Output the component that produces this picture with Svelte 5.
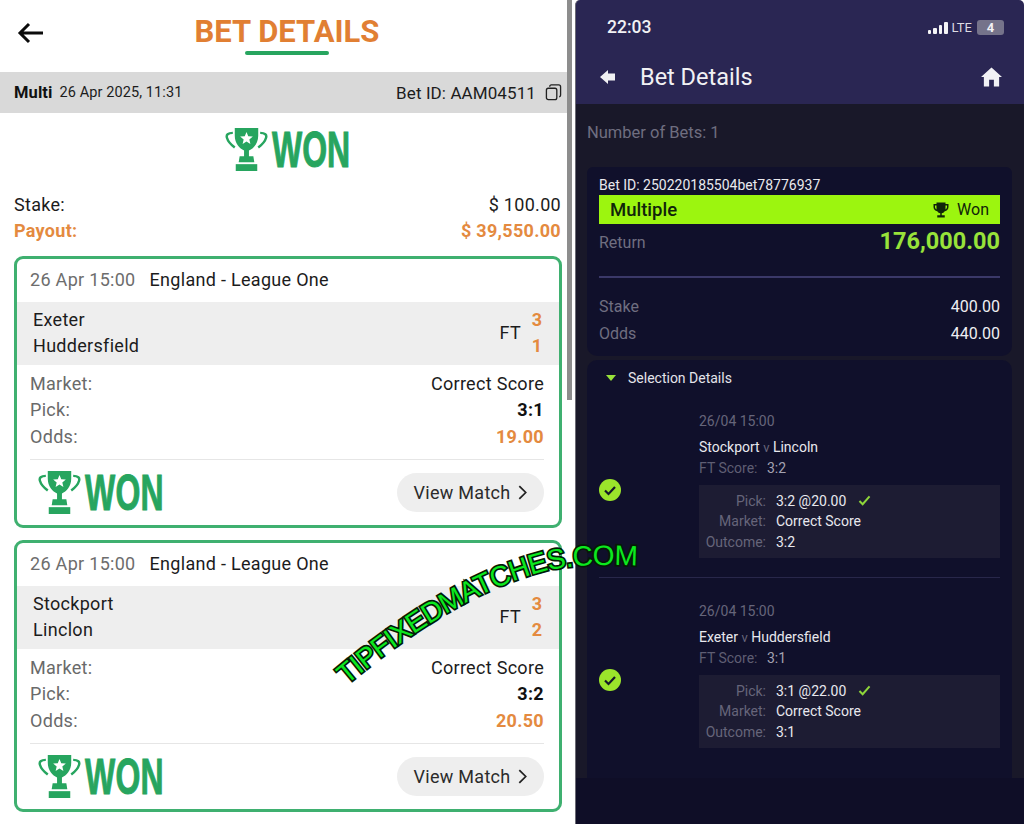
<script>
  const matches = [
    { home: 'Exeter', away: 'Huddersfield', hs: 3, as: 1, pick: '3:1', odds: '19.00' },
    { home: 'Stockport', away: 'Linclon', hs: 3, as: 2, pick: '3:2', odds: '20.50' }
  ];
  const selections = [
    { home: 'Stockport', away: 'Lincoln', score: '3:2', pick: '3:2 @20.00' },
    { home: 'Exeter', away: 'Huddersfield', score: '3:1', pick: '3:1 @22.00' }
  ];
</script>

{#snippet won()}
  <div class="won">
    <svg class="trophy" viewBox="0 0 44 46" width="43" height="45" aria-hidden="true">
      <path d="M10 1H34V9C34 17 29 22 24.500 24V30H29L30 36H14L15 30H19.500V24C15 22 10 17 10 9Z" fill="#27a55f"/>
      <rect x="11" y="38" width="22" height="7" fill="#27a55f"/>
      <path d="M8 6C3 6 1 8 2 11C3 15 6 18 10 21M36 6C41 6 43 8 42 11C41 15 38 18 34 21" fill="none" stroke="#27a55f" stroke-width="2.500"/>
      <path d="M22 5L23.800 9.500L28.500 9.800L24.900 12.800L26 17.400L22 14.900L18 17.400L19.100 12.800L15.500 9.800L20.200 9.500Z" fill="#fff"/>
    </svg>
    <span class="won-text"><span>WON</span></span>
  </div>
{/snippet}

{#snippet wonSmall()}
  <svg viewBox="0 0 24 24" width="18" height="18" aria-hidden="true">
    <path d="M6 2H18V4H22V8C22 11 20 13 17 13.500C16 15 14.500 16 13 16.300V19H17V22H7V19H11V16.300C9.500 16 8 15 7 13.500C4 13 2 11 2 8V4H6ZM6 6H4V8C4 9.500 5 10.800 6 11.200ZM18 6V11.200C19 10.800 20 9.500 20 8V6Z" fill="#10240a"/>
  </svg>
{/snippet}

<div class="screen">
  <section class="left">
    <div class="left-main">
      <header class="top">
        <svg class="back" viewBox="0 0 28 24" width="28" height="24" aria-hidden="true">
          <path d="M26 12H3M12 3L3 12L12 21" fill="none" stroke="#0b0b0b" stroke-width="3"/>
        </svg>
        <h1>BET DETAILS</h1>
      </header>

      <div class="meta">
        <b>Multi</b>
        <span class="when">26 Apr 2025, 11:31</span>
        <span class="betid">Bet ID: AAM04511</span>
        <svg viewBox="0 0 18 18" width="17" height="17" aria-hidden="true">
          <rect x="1.500" y="4.500" width="11" height="12" rx="2" fill="none" stroke="#222" stroke-width="1.400"/>
          <path d="M5 2.800C5 1.800 5.700 1 6.700 1H14.500C15.700 1 16.500 1.800 16.500 3V12C16.500 13 15.800 13.500 15 13.500" fill="none" stroke="#222" stroke-width="1.400"/>
        </svg>
      </div>

      <div class="won-row">{@render won()}</div>

      <div class="totals">
        <div class="line"><span>Stake:</span><span>$ 100.00</span></div>
        <div class="line payout"><span>Payout:</span><span>$ 39,550.00</span></div>
      </div>

      {#each matches as m}
        <article class="card">
          <div class="card-head"><span class="time">26 Apr 15:00</span><span>England - League One</span></div>
          <div class="band">
            <div class="teams"><div>{m.home}</div><div>{m.away}</div></div>
            <span class="ft">FT</span>
            <div class="scores"><div>{m.hs}</div><div>{m.as}</div></div>
          </div>
          <div class="rows">
            <div class="row"><span class="lab">Market:</span><span>Correct Score</span></div>
            <div class="row"><span class="lab">Pick:</span><b>{m.pick}</b></div>
            <div class="row"><span class="lab">Odds:</span><b class="orange">{m.odds}</b></div>
          </div>
          <div class="card-foot">
            {@render won()}
            <div class="view">View Match
              <svg viewBox="0 0 12 18" width="11" height="17" aria-hidden="true"><path d="M2.500 2L9.500 9L2.500 16" fill="none" stroke="#222" stroke-width="1.900"/></svg>
            </div>
          </div>
        </article>
      {/each}
    </div>
    <div class="scrollbar"></div>
  </section>

  <section class="right">
    <div class="status">
      <span class="clock">22:03</span>
      <div class="signal"><i class="b1"></i><i class="b2"></i><i class="b3"></i><i class="b4"></i></div>
      <span class="lte">LTE</span>
      <span class="batt">4</span>
    </div>
    <div class="bar">
      <svg viewBox="0 0 16 14" width="16" height="14" aria-hidden="true"><path d="M0 7L8 0V3.500H15V10.500H8V14Z" fill="#f1f1f4"/></svg>
      <span class="bar-title">Bet Details</span>
      <svg class="home" viewBox="0 0 22 20" width="21" height="20" aria-hidden="true"><path d="M11 0L22 10H19V20H13.500V13H8.500V20H3V10H0Z" fill="#f1f1f4"/></svg>
    </div>

    <div class="body">
      <div class="num">Number of Bets: 1</div>
      <div class="panel first">
        <div class="id">Bet ID: 250220185504bet78776937</div>
        <div class="lime"><span class="multiple">Multiple</span>{@render wonSmall()}<span class="wontxt">Won</span></div>
        <div class="ret"><span>Return</span><b>176,000.00</b></div>
        <div class="rule"></div>
        <div class="kv"><span>Stake</span><em>400.00</em></div>
        <div class="kv"><span>Odds</span><em>440.00</em></div>
      </div>
      <div class="panel second">
        <div class="sel-head"><i class="tri"></i>Selection Details</div>
        {#each selections as s, i}
          {#if i > 0}<div class="sel-rule"></div>{/if}
          <div class="sel" class:later={i > 0}>
            <div class="tick">
              <svg viewBox="0 0 22 22" width="22" height="22" aria-hidden="true"><circle cx="11" cy="11" r="11" fill="#9be52b"/><path d="M6 11.500L9.500 15L16 8" fill="none" stroke="#16182a" stroke-width="2.200"/></svg>
            </div>
            <div class="sel-body">
              <div class="date">26/04 15:00</div>
              <div class="vs">{s.home} <span>v</span> {s.away}</div>
              <div class="ftscore">FT Score: <em>{s.score}</em></div>
              <div class="box">
                <span class="k">Pick:</span>
                <span class="v">{s.pick}
                  <svg viewBox="0 0 14 12" width="13" height="11" aria-hidden="true"><path d="M1.500 6.500L5 10L12.500 1.500" fill="none" stroke="#8ed63a" stroke-width="2.200"/></svg>
                </span>
                <span class="k">Market:</span><span class="v">Correct Score</span>
                <span class="k">Outcome:</span><span class="v">{s.score}</span>
              </div>
            </div>
          </div>
        {/each}
      </div>
      <div class="foot"></div>
    </div>
  </section>

  <svg class="mark" viewBox="0 0 1024 824" width="1024" height="824">
    <defs><path id="curve" d="M347 685C400 640 472 590 545 571C575 564 605 564 645 566"/></defs>
    <text class="mark-text"><textPath href="#curve">TIPFIXEDMATCHES.COM</textPath></text>
  </svg>
</div>

<style>
  :global(body) { margin: 0; background: #fff; }
  .screen {
    position: relative;
    display: flex;
    width: 1024px;
    height: 824px;
    overflow: hidden;
    font-family: Roboto, "Liberation Sans", sans-serif;
    color: #1c1c1c;
  }

  /* left */
  .left { display: flex; width: 575px; flex: none; background: #fff; }
  .left-main { width: 567px; flex: none; }
  .scrollbar { width: 5px; height: 400px; background: #8d8d8d; }
  .top { position: relative; height: 72px; }
  .back { position: absolute; left: 17px; top: 21px; }
  h1 {
    margin: 0;
    padding-top: 14px;
    text-align: center;
    font-size: 31px;
    line-height: 36px;
    font-weight: 700;
    color: #e17f33;
    width: 574px;
  }
  h1::after {
    content: "";
    display: block;
    width: 84px;
    height: 4px;
    border-radius: 2px;
    margin: 1px auto 0;
    background: #27a55f;
  }
  .meta {
    display: flex;
    align-items: center;
    height: 41px;
    width: 558px;
    padding-left: 14px;
    background: #d9d9d9;
    font-size: 17px;
    letter-spacing: 0.100px;
  }
  .meta b { font-weight: 700; color: #111; font-size: 16.500px; }
  .when { margin-left: 7px; font-size: 14.500px; }
  .betid { margin-left: auto; margin-right: 9px; }
  .meta svg { margin-right: 10px; }
  .won-row { display: flex; justify-content: center; padding: 14px 0 0 7px; height: 45px; }
  .won { display: flex; align-items: center; height: 45px; }
  .won-text {
    display: block;
    width: 78px;
    margin-left: 4px;
    height: 45px;
    line-height: 46px;
    font-family: "Liberation Sans", sans-serif;
    font-weight: 700;
    font-size: 50px;
    color: #27a55f;
    white-space: nowrap;
    -webkit-text-stroke: 1px #27a55f;
  }
  .won-text span { display: inline-block; transform: scaleX(0.64); transform-origin: left center; }
  .totals { padding: 20px 6px 0 14px; font-size: 18px; letter-spacing: 0.300px; }
  .line { display: flex; justify-content: space-between; height: 26px; line-height: 26px; }
  .payout { color: #e48a3f; font-weight: 700; }
  .card {
    box-sizing: border-box;
    width: 548px;
    height: 272px;
    margin: 12px 0 0 14px;
    border: 3px solid #3fb070;
    border-radius: 9px;
    overflow: hidden;
    background: #fff;
    letter-spacing: 0.300px;
  }
  .card-head { display: flex; gap: 14px; height: 43px; padding: 8px 0 0 13px; font-size: 18px; line-height: 26px; box-sizing: border-box; }
  .time { color: #6d6d6d; }
  .band {
    display: flex;
    align-items: center;
    height: 63px;
    box-sizing: border-box;
    background: #eeeeee;
    padding: 0 16px 2px;
    font-size: 18px;
    line-height: 26px;
  }
  .teams { flex: 1; }
  .ft { margin-right: 10px; }
  .scores { font-weight: 700; color: #e48a3f; text-align: center; width: 12px; }
  .rows { padding: 6px 15px 0 13px; font-size: 18px; line-height: 26.400px; height: 94px; box-sizing: border-box; }
  .row { display: flex; justify-content: space-between; }
  .lab { color: #6a6a6a; }
  .row b { font-weight: 700; color: #111; }
  .row b.orange { color: #e48a3f; }
  .card-foot {
    display: flex;
    justify-content: space-between;
    align-items: center;
    margin: 0 15px 0 13px;
    height: 66px;
    box-sizing: border-box;
    border-top: 1px solid #e6e6e6;
    padding-left: 8px;
  }
  .view {
    display: flex;
    align-items: center;
    gap: 6px;
    box-sizing: border-box;
    height: 39px;
    width: 147px;
    border-radius: 20px;
    justify-content: center;
    background: #eeeeee;
    font-size: 18px;
    color: #2b2b2b;
  }

  /* right */
  .right {
    flex: 1;
    display: flex;
    flex-direction: column;
    background: #2a2653;
    border-left: 1px solid #6b6a74;
    border-top-left-radius: 5px;
    border-top-right-radius: 5px;
    color: #f1f1f4;
    overflow: hidden;
  }
  .status { display: flex; align-items: center; height: 54px; padding: 0 20px 0 31px; }
  .clock { font-size: 17.500px; font-weight: 500; margin-right: auto; }
  .signal { display: flex; align-items: flex-end; gap: 2px; height: 13px; }
  .signal i { display: block; width: 3.500px; background: #f4f4f6; border-radius: 1px; }
  .b1 { height: 4px; }
  .b2 { height: 6px; }
  .b3 { height: 9px; }
  .b4 { height: 12px; }
  .lte { font-size: 13px; margin: 0 5px 0 4px; color: #dcdce2; }
  .batt {
    width: 27px;
    height: 15px;
    border-radius: 3px;
    background: #75738a;
    font-size: 13px;
    font-weight: 700;
    line-height: 15px;
    text-align: center;
  }
  .bar { display: flex; align-items: center; height: 54px; padding: 0 22px 0 24px; margin-top: -4px; }
  .bar-title { font-size: 23.500px; margin-left: 24px; margin-right: auto; }
  .body { flex: 1; background: #191829; display: flex; flex-direction: column; }
  .num { height: 63px; padding: 17px 0 0 11px; box-sizing: border-box; font-size: 16.500px; line-height: 24px; color: #6f6e80; }
  .panel { margin: 0 12px 0 11px; background: #10102b; padding: 0 12px; }
  .first { height: 189px; border-radius: 6px 6px 10px 10px; box-sizing: border-box; padding-top: 10px; }
  .second { flex: 1; margin-top: 4px; border-radius: 10px 10px 0 0; min-height: 0; }
  .id { font-size: 14px; line-height: 16px; color: #e9e9ee; height: 18px; }
  .lime {
    display: flex;
    align-items: center;
    height: 29px;
    padding: 0 11px;
    background: #9cf50f;
    color: #10240a;
    font-size: 16px;
  }
  .multiple { font-size: 18.500px; font-weight: 500; margin-right: auto; }
  .wontxt { margin-left: 7px; }
  .ret { display: flex; justify-content: space-between; align-items: center; height: 37px; font-size: 16px; color: #6f6e80; }
  .ret b { font-size: 23.500px; color: #98e23a; font-weight: 700; margin-bottom: 3px; }
  .rule { height: 2px; background: #3a3868; margin: 15px 0; }
  .kv { display: flex; justify-content: space-between; height: 27px; line-height: 27px; font-size: 16px; color: #6f6e80; }
  .kv em { font-style: normal; color: #eeeef2; }
  .sel-head { display: flex; align-items: center; height: 36px; font-size: 14px; color: #e4e4ea; padding-left: 7px; }
  .tri {
    display: block;
    width: 0;
    height: 0;
    margin-right: 12px;
    border: 5px solid transparent;
    border-top: 6px solid #98e23a;
    border-bottom: 0;
  }
  .sel { display: flex; align-items: flex-start; padding: 13px 0 19px; }
  .sel.later { padding-top: 21px; }
  .tick { width: 100px; padding-top: 70px; flex: none; display: flex; }
  .sel-body { flex: 1; font-size: 14px; line-height: 21px; }
  .sel-rule { height: 1px; background: #28274a; }
  .date { color: #66657a; height: 27.500px; line-height: 24px; }
  .vs { color: #e8e8ee; height: 21px; }
  .vs span { color: #66657a; font-size: 13px; }
  .ftscore { color: #5f5e73; height: 27.500px; }
  .ftscore em { font-style: normal; color: #a3a2b2; margin-left: 6px; }
  .box {
    display: grid;
    grid-template-columns: 67px 1fr;
    column-gap: 10px;
    align-items: center;
    align-content: start;
    background: #1d1c33;
    height: 73px;
    box-sizing: border-box;
    padding-top: 5.500px;
    line-height: 20.700px;
  }
  .k { text-align: right; color: #66657a; }
  .v { color: #e8e8ee; }
  .v svg { margin-left: 8px; }
  .foot { flex: none; height: 46px; background: #0f0e27; }

  /* watermark */
  .mark { position: absolute; left: 0; top: 0; pointer-events: none; }
  .mark-text {
    font-family: "Liberation Sans", sans-serif;
    font-size: 28px;
    letter-spacing: -0.600px;
    fill: #0ce81f;
    stroke: #041a06;
    stroke-width: 3.400px;
    paint-order: stroke;
  }
</style>
